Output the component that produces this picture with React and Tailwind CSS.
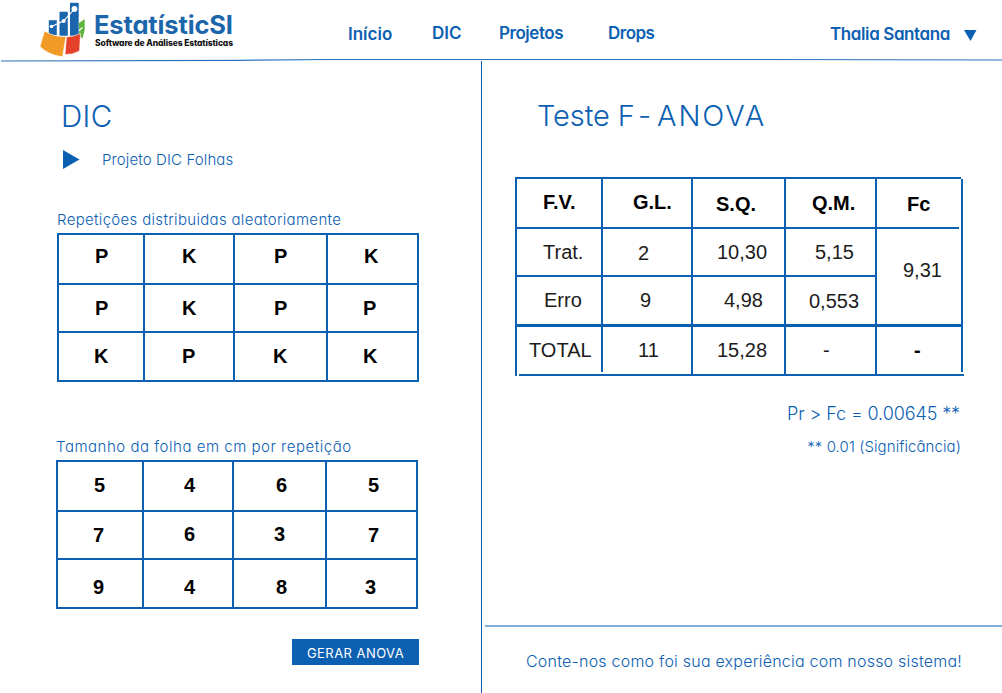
const GOTHIC =
  "font-['Century_Gothic','URW_Gothic',Inter,Lato,sans-serif] [font-feature-settings:'cv11','ss03'] whitespace-nowrap";

function Logo() {
  return (
    <svg width="240" height="60" viewBox="0 0 240 60" className="block shrink-0" aria-label="EstatísticSI">
      <path d="M79 23l5.700-4v11l-2.200 8.500l-3.500-3z" fill="#5fb53f" />
      <path d="M78.500 31l4-3.500" stroke="#fff" strokeWidth="1.200" />
      <g fill="#1b66ab">
        <path d="M48.800 20.200h8v15h-8z" />
        <path d="M59.500 11.700h8.300v24h-8.300z" />
        <path d="M70 2.800h8.700v33H70z" />
      </g>
      <path d="M44.500 31Q54 37 66 36.500L62.500 56.800Q48 55 40 46.500z" fill="#f19a26" stroke="#fff" strokeWidth="0.600" />
      <path d="M66.500 37Q74 36.500 80.500 33.500L79.500 51Q72 55 65 54.500z" fill="#e5412a" stroke="#fff" strokeWidth="0.600" />
      <path d="M51.500 26.500L63.500 21L74.500 9" fill="none" stroke="#fff" strokeWidth="1.100" />
      <g fill="#fff">
        <circle cx="51.500" cy="26.500" r="1.800" />
        <circle cx="63.700" cy="21" r="2" />
        <circle cx="74.400" cy="9" r="2.900" />
      </g>
      <text x="94" y="34" textLength="139" fontSize="25.500" fontWeight="700" fill="#1b66ab" className={GOTHIC}>
        EstatísticSI
      </text>
      <text x="95" y="46" textLength="138" fontSize="8.500" fontWeight="800" fill="#111" className={GOTHIC}>
        Software de Análises Estatísticas
      </text>
    </svg>
  );
}

function Header() {
  return (
    <header className="h-[61px]">
      <div className="flex h-[58px] text-[17px] leading-5 font-semibold text-[#0c60b2]">
        <Logo />
        <nav className={`flex pt-[23px] pl-[108px] ${GOTHIC}`}>
          <a className="w-[84px] pt-px">Início</a>
          <a className="w-[67px]">DIC</a>
          <a className="w-[109px] tracking-[-0.45px]">Projetos</a>
          <a className="w-[222px] tracking-[-0.5px]">Drops</a>
        </nav>
        <div className={`flex pt-6 ${GOTHIC}`}>
          <span className="w-[134px] tracking-[-0.4px]">Thalia Santana</span>
          <svg width="13" height="12" viewBox="0 0 13 12" className="mt-[6px]">
            <path d="M0 0h12.500L6.500 11z" fill="#0c60b2" />
          </svg>
        </div>
      </div>
      <svg width="1002" height="4" viewBox="0 58 1002 4" className="block">
        <path d="M1 61L240 60.300L330 59.500H760L1002 60" fill="none" stroke="#2b73bb" strokeWidth="1.200" />
      </svg>
    </header>
  );
}

const REPS = [
  ["P", "pl-[36px] pt-[11px]"], ["K", "pl-[37px] pt-[11px]"], ["P", "pl-[39px] pt-[11px]"], ["K", "pl-[36px] pt-[11px]"],
  ["P", "pl-[36px] pt-[13px]"], ["K", "pl-[37px] pt-[13px]"], ["P", "pl-[39px] pt-[13px]"], ["P", "pl-[35px] pt-[13px]"],
  ["K", "pl-[35px] pt-[13px]"], ["P", "pl-[37px] pt-[13px]"], ["K", "pl-[38px] pt-[13px]"], ["K", "pl-[35px] pt-[13px]"],
];

const SIZES = [
  ["5", "pl-[36px] pt-[13px]"], ["4", "pl-[40px] pt-[13px]"], ["6", "pl-[42px] pt-[13px]"], ["5", "pl-[41px] pt-[13px]"],
  ["7", "pl-[35px] pt-[13px]"], ["6", "pl-[40px] pt-[12px]"], ["3", "pl-[40px] pt-[12px]"], ["7", "pl-[41px] pt-[13px]"],
  ["9", "pl-[35px] pt-[17px]"], ["4", "pl-[40px] pt-[17px]"], ["8", "pl-[42px] pt-[17px]"], ["3", "pl-[38px] pt-[17px]"],
];

const ANOVA = [
  ["F.V.", "pl-[26px] pt-[13px] font-bold text-black"],
  ["G.L.", "pl-[30px] pt-[13px] font-bold text-black"],
  ["S.Q.", "pl-[23px] pt-[15px] font-bold text-black"],
  ["Q.M.", "pl-[26px] pt-[14px] font-bold text-black"],
  ["Fc", "pl-[30px] pt-[15px] font-bold text-black"],
  ["Trat.", "pl-[26px] pt-[13px]"],
  ["2", "pl-[35px] pt-[14px]"],
  ["10,30", "pl-[24px] pt-[13px]"],
  ["5,15", "pl-[29px] pt-[13px]"],
  ["9,31", "row-span-2 pl-[26px] pt-[31px]"],
  ["Erro", "pl-[27px] pt-[13px]"],
  ["9", "pl-[37px] pt-[13px]"],
  ["4,98", "pl-[31px] pt-[13px]"],
  ["0,553", "pl-[23px] pt-[14px]"],
  ["TOTAL", "mt-px pl-[12px] pt-[13px]"],
  ["11", "mt-px pl-[35px] pt-[13px]"],
  ["15,28", "mt-px pl-[24px] pt-[13px]"],
  ["-", "mt-px pl-[37px] pt-[13px]"],
  ["-", "mt-px pl-[37px] pt-[13px] font-bold text-black"],
];

function Cells({ items }) {
  return items.map(([text, cls], i) => (
    <div key={i} className={`bg-white ${cls}`}>
      {text}
    </div>
  ));
}

function SampleTable({ items }) {
  return (
    <div className="grid w-[362px] grid-cols-[84px_88px_91px_89px] grid-rows-[48px_46px_47px] gap-[2px] bg-[#0c60b2] p-[2px] font-['Liberation_Sans',sans-serif] text-[20px] leading-5 font-bold text-black">
      <Cells items={items} />
    </div>
  );
}

function AnovaTable() {
  return (
    <div className="relative grid w-[448px] grid-cols-[84px_88px_91px_89px_84px] grid-rows-[48px_46px_47px_48px] gap-[2px] bg-[#0c60b2] p-[2px] font-['Liberation_Sans',sans-serif] text-[20px] leading-5 text-[#1c1c1c]">
      <Cells items={ANOVA} />
      <i className="absolute top-0 right-0 h-[2px] w-[2px] bg-white" />
      <i className="absolute top-[50px] right-[2px] h-[2px] w-[2px] bg-white" />
      <i className="absolute right-0 bottom-[2px] h-[2px] w-[2px] bg-white" />
      <i className="absolute -right-px bottom-0 h-[2px] w-px bg-[#0c60b2]" />
      <i className="absolute bottom-0 left-[2px] h-[2px] w-[2px] bg-white" />
      <i className="absolute bottom-[2px] left-[86px] h-[2px] w-[2px] bg-white" />
    </div>
  );
}

export default function App() {
  return (
    <div className="h-[693px] w-[1002px] overflow-hidden bg-white text-[#0c60b2]">
      <Header />
      <main className="flex h-[632px]">
        <section className="w-[481px]">
          <h1 className={`h-10 pt-[35px] pl-[61px] text-[29.5px] leading-10 font-light tracking-[0.4px] ${GOTHIC}`}>DIC</h1>
          <div className="mt-[49px] flex h-5 pl-[63px]">
            <svg width="17" height="19" viewBox="0 0 17 19">
              <path d="M0 0L16.500 9.500L0 19z" fill="#0c60b2" />
            </svg>
            <p className={`pl-[22px] text-[15px] leading-5 font-light tracking-[0.12px] ${GOTHIC}`}>Projeto DIC Folhas</p>
          </div>
          <p className={`mt-10 h-[23px] pl-[57px] text-[15px] leading-5 font-light tracking-[0.32px] ${GOTHIC}`}>
            Repetições distribuidas aleatoriamente
          </p>
          <div className="pl-[57px]">
            <SampleTable items={REPS} />
          </div>
          <p className={`mt-[55px] h-[23px] pl-[56px] text-[15px] leading-5 font-light tracking-[0.52px] ${GOTHIC}`}>
            Tamanho da folha em cm por repetição
          </p>
          <div className="pl-[56px]">
            <SampleTable items={SIZES} />
          </div>
          <button
            className={`mt-[30px] ml-[292px] block h-[26px] w-[127px] bg-[#0c60b2] text-center text-[13px] leading-[29px] tracking-[0.45px] text-white ${GOTHIC}`}
          >
            GERAR ANOVA
          </button>
        </section>
        <div className="w-px bg-[#0c60b2]" />
        <section className="flex-1">
          <h1 className={`flex h-[116px] pt-[35px] pl-[55px] text-[29px] leading-10 font-light ${GOTHIC}`}>
            <span className="w-[101px] tracking-[-0.1px]">Teste F</span>
            <span className="w-[19px]">-</span>
            <span className="tracking-[1.9px]">ANOVA</span>
          </h1>
          <div className="pl-[33px]">
            <AnovaTable />
          </div>
          <p className={`mt-[26px] mr-[42px] text-right text-[18px] leading-6 font-light tracking-[-0.1px] ${GOTHIC}`}>
            Pr &gt; Fc = 0.00645 **
          </p>
          <p className={`mt-[11px] mr-[41px] text-right text-[15px] leading-5 font-light tracking-[0.08px] ${GOTHIC}`}>
            ** 0.01 (Significância)
          </p>
          <div className="mt-[168px] ml-[3px] h-[2px] bg-[#7fb0dc]" />
          <p className={`pt-[24px] pl-[44px] text-[16px] leading-5 font-light tracking-[0.22px] ${GOTHIC}`}>
            Conte-nos como foi sua experiência com nosso sistema!
          </p>
        </section>
      </main>
    </div>
  );
}
